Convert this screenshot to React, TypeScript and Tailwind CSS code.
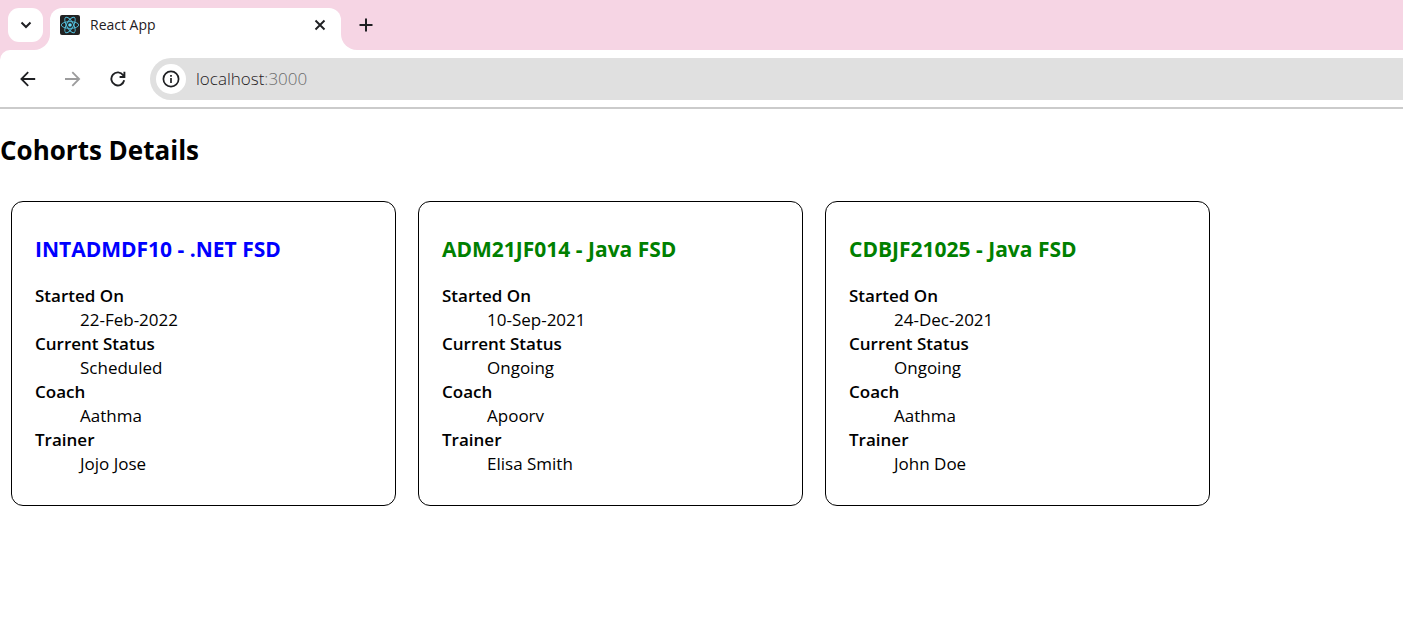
import React from "react";

type Cohort = {
  code: string;
  track: string;
  startedOn: string;
  status: "Scheduled" | "Ongoing";
  coach: string;
  trainer: string;
};

const cohorts: Cohort[] = [
  { code: "INTADMDF10", track: ".NET FSD", startedOn: "22-Feb-2022", status: "Scheduled", coach: "Aathma", trainer: "Jojo Jose" },
  { code: "ADM21JF014", track: "Java FSD", startedOn: "10-Sep-2021", status: "Ongoing", coach: "Apoorv", trainer: "Elisa Smith" },
  { code: "CDBJF21025", track: "Java FSD", startedOn: "24-Dec-2021", status: "Ongoing", coach: "Aathma", trainer: "John Doe" },
];

function ReactLogo() {
  return (
    <svg viewBox="0 0 20 20" className="size-5 shrink-0" aria-hidden="true">
      <rect width="20" height="20" rx="2" fill="#222" />
      <g fill="none" stroke="#53c1de" strokeWidth="0.9">
        <ellipse cx="10" cy="10" rx="8.7" ry="3.4" />
        <ellipse cx="10" cy="10" rx="8.7" ry="3.4" transform="rotate(60 10 10)" />
        <ellipse cx="10" cy="10" rx="8.7" ry="3.4" transform="rotate(120 10 10)" />
      </g>
      <circle cx="10" cy="10" r="1.8" fill="#61dafb" />
    </svg>
  );
}

function TabStrip() {
  return (
    <div className="flex h-[50px] bg-white">
      <div className="flex w-[50px] shrink-0 items-start rounded-br-2xl bg-[#f6d5e4] pt-2 pl-2">
        <button aria-label="Search tabs" className="flex h-[34px] w-[35px] items-center justify-center rounded-[11px] bg-white">
          <svg viewBox="0 0 12 8" className="h-2 w-3" fill="none" stroke="#1f2023" strokeWidth="2" aria-hidden="true">
            <path d="M1.5 1.5 6 6l4.500-4.500" />
          </svg>
        </button>
      </div>
      <div className="flex w-[291px] shrink-0 bg-linear-to-b from-[#f6d5e4] from-50% to-white to-50% pt-2">
        <div className="flex h-[42px] flex-1 items-start rounded-t-xl bg-white pt-[7px] pr-[13px] pl-[10px]">
          <ReactLogo />
          <span className="ml-[10px] flex-1 text-[14px] leading-5 text-[#1f2023]">React App</span>
          <button aria-label="Close tab" className="flex h-5 w-4 items-center justify-center">
            <svg viewBox="0 0 12 12" className="size-3" fill="none" stroke="#1f2023" strokeWidth="1.900" aria-hidden="true">
              <path d="m1.500 1.500 9 9M10.500 1.500l-9 9" />
            </svg>
          </button>
        </div>
      </div>
      <div className="flex flex-1 items-center rounded-bl-2xl bg-[#f6d5e4] pl-[17px]">
        <button aria-label="New tab" className="flex size-4 items-center justify-center">
          <svg viewBox="0 0 14 14" className="size-[14px]" fill="none" stroke="#1f2023" strokeWidth="2" aria-hidden="true">
            <path d="M7 .5v13M.5 7h13" />
          </svg>
        </button>
      </div>
    </div>
  );
}

function Toolbar() {
  return (
    <div className="bg-[#f6d5e4]">
      <div className="flex items-center rounded-tl-[10px] border-b-2 border-[#cbcbcb] bg-white pt-2 pb-[7px] pl-5">
        <div className="flex items-center gap-[29px]">
          <button aria-label="Back" className="size-4">
            <svg viewBox="0 0 16 16" className="size-4" fill="none" stroke="#1f2023" strokeWidth="1.800" aria-hidden="true">
              <path d="M15.200 8H1.800M8.200 1.200 1.400 8l6.800 6.800" />
            </svg>
          </button>
          <button aria-label="Forward" className="size-4" disabled>
            <svg viewBox="0 0 16 16" className="size-4" fill="none" stroke="#9c9c9d" strokeWidth="1.800" aria-hidden="true">
              <path d="M0 8h13.500M7.300 1.200 14.100 8l-6.800 6.800" />
            </svg>
          </button>
          <button aria-label="Reload" className="size-4">
            <svg viewBox="0 0 16 16" className="size-4" fill="none" stroke="#1f2023" strokeWidth="1.900" aria-hidden="true">
              <path d="M14.200 9.300A6.500 6.500 0 1 1 13.200 4.200" />
              <path d="M9.600 6H14.400V.8" />
              <path d="M11.500 5.500 14.300 2.500V5.500Z" fill="#1f2023" stroke="none" />
            </svg>
          </button>
        </div>
        <div className="ml-6 flex h-[42px] flex-1 items-center rounded-l-full bg-[#e0e0e0] pl-[6px]">
          <button aria-label="View site information" className="flex size-[30px] items-center justify-center rounded-full bg-white">
            <svg viewBox="0 0 18 18" className="size-[18px]" fill="none" stroke="#1f2023" strokeWidth="1.700" aria-hidden="true">
              <circle cx="9" cy="9" r="7.600" />
              <path d="M9 8v5M9 5v1.800" />
            </svg>
          </button>
          <a href="http://localhost:3000" className="ml-[10px] text-[17px] leading-6 font-light text-[#1f2023]">
            localhost<span className="text-[#6b6b6b]">:3000</span>
          </a>
        </div>
      </div>
    </div>
  );
}

function CohortCard({ cohort }: { cohort: Cohort }) {
  const rows = [
    ["Started On", cohort.startedOn],
    ["Current Status", cohort.status],
    ["Coach", cohort.coach],
    ["Trainer", cohort.trainer],
  ];
  return (
    <article className="w-[385px] rounded-xl border border-black px-[23px] pt-[31px] pb-[29px]">
      <h3 className={cohort.status === "Ongoing" ? "text-[21px] leading-8 font-bold text-[#008000]" : "text-[21px] leading-8 font-bold text-[#0000ff]"}>
        {cohort.code} - {cohort.track}
      </h3>
      <dl className="mt-[19px] text-[17px] leading-6">
        {rows.map(([label, value]) => (
          <React.Fragment key={label}>
            <dt className="font-semibold">{label}</dt>
            <dd className="ml-[45px]">{value}</dd>
          </React.Fragment>
        ))}
      </dl>
    </article>
  );
}

export default function App() {
  return (
    <div className="min-h-screen bg-white font-['Segoe_UI','Open_Sans','Noto_Sans',sans-serif] text-black">
      <header>
        <TabStrip />
        <Toolbar />
      </header>
      <main>
        <h1 className="pt-[23px] text-[26px] leading-9 font-bold">Cohorts Details</h1>
        <div className="mt-[33px] flex flex-wrap gap-[22px] px-[11px]">
          {cohorts.map((cohort) => (
            <CohortCard key={cohort.code} cohort={cohort} />
          ))}
        </div>
      </main>
    </div>
  );
}
